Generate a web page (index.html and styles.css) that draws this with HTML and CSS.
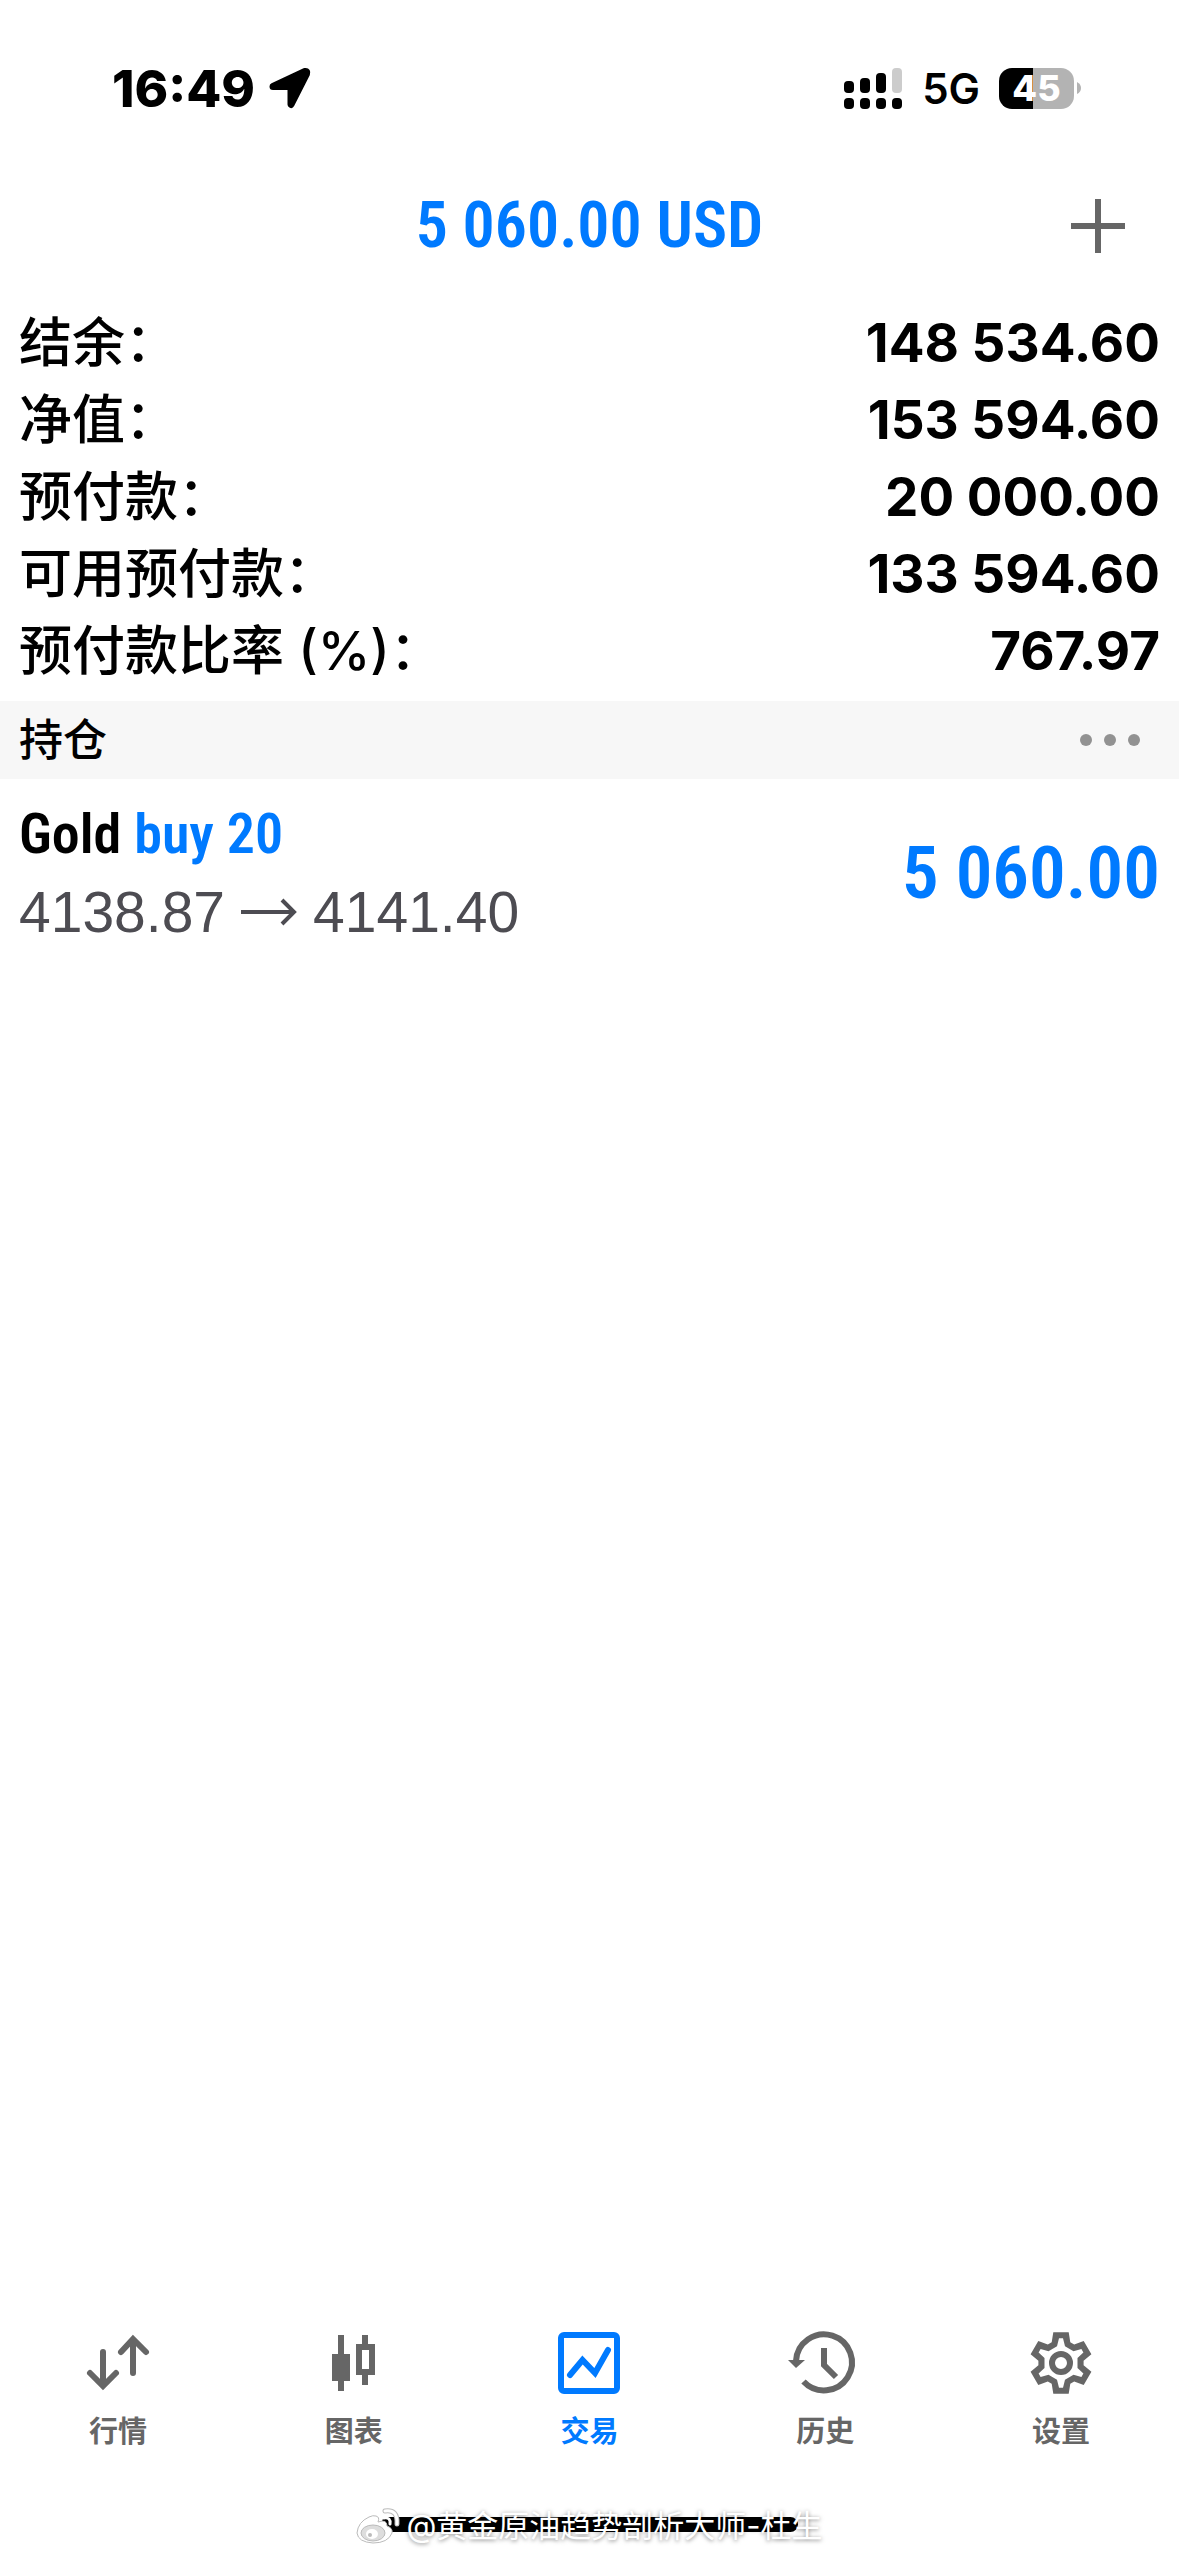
FILE: index.html
```
<!DOCTYPE html>
<html lang="zh-CN">
<head>
    <meta charset="UTF-8">
    <meta name="viewport" content="width=device-width, initial-scale=1.0">
    <title>交易</title>
    <link rel="stylesheet" href="styles.css">
</head>
<body>
<div class="status-bar">
    <div class="status-left">
        <span class="time">16:49</span>
        <svg class="location" viewBox="0 0 42 42">
            <path d="M4 19.5 36 4.5Q38.500 4 37.500 7L22 37.500 22 19.500Z" fill="#000" stroke="#000" stroke-width="7" stroke-linejoin="round"/>
        </svg>
    </div>
    <div class="status-right">
        <svg class="signal" viewBox="0 0 58 41">
            <rect x="0" y="13" width="10" height="12" rx="4"/>
            <rect x="16" y="10" width="10" height="15" rx="4"/>
            <rect x="32" y="5" width="10" height="20" rx="4"/>
            <rect x="48" y="0" width="10" height="25" rx="4" fill="#ccc"/>
            <rect x="0" y="30" width="10" height="11" rx="4"/>
            <rect x="16" y="30" width="10" height="11" rx="4"/>
            <rect x="32" y="30" width="10" height="11" rx="4"/>
            <rect x="48" y="30" width="10" height="11" rx="4"/>
        </svg>
        <span class="network">5G</span>
        <div class="battery">
            <div class="battery-level">45</div>
            <svg class="battery-cap" viewBox="0 0 4 12"><path d="M0 0Q4 2 4 6T0 12Z" fill="#b3b3b3"/></svg>
        </div>
    </div>
</div>

<header class="header">
    <h1>5 060.00 USD</h1>
    <button class="add" type="button" aria-label="新订单">
        <svg viewBox="0 0 54 54"><path d="M27 0V54M0 27H54" stroke="#666" stroke-width="6"/></svg>
    </button>
</header>

<main>
    <dl class="summary">
        <div class="summary-row"><dt>结余：</dt><dd>148 534.60</dd></div>
        <div class="summary-row"><dt>净值：</dt><dd>153 594.60</dd></div>
        <div class="summary-row"><dt>预付款：</dt><dd>20 000.00</dd></div>
        <div class="summary-row"><dt>可用预付款：</dt><dd>133 594.60</dd></div>
        <div class="summary-row"><dt>预付款比率 (%)：</dt><dd>767.97</dd></div>
    </dl>

    <div class="section-bar">
        <h2>持仓</h2>
        <button class="more" type="button" aria-label="更多">
            <svg viewBox="0 0 60 12" fill="#929292">
                <circle cx="6" cy="6" r="6"/>
                <circle cx="30" cy="6" r="6"/>
                <circle cx="54" cy="6" r="6"/>
            </svg>
        </button>
    </div>

    <div class="position">
        <div>
            <div class="symbol">Gold <span>buy 20</span></div>
            <div class="prices">
                4138.87
                <svg viewBox="0 0 56 28"><path d="M0 14H53M41 2 53 14 41 26" fill="none" stroke="#4d4c52" stroke-width="4"/></svg>
                4141.40
            </div>
        </div>
        <div class="profit">5 060.00</div>
    </div>
</main>

<nav class="tab-bar">
    <a href="#quotes">
        <svg viewBox="0 0 64 64" fill="none" stroke="currentColor" stroke-width="6" stroke-linecap="round">
            <path d="M17 21V54M4 42 17 55 30 42"/>
            <path d="M47 42V10M35 21 47 8 60 21"/>
        </svg>
        行情
    </a>
    <a href="#charts">
        <svg viewBox="0 0 64 64" fill="currentColor">
            <path d="M16 4h6v19h6v27h-6v10h-6V50h-6V23h6z"/>
            <path fill-rule="evenodd" d="M40 4h6v9h7v31h-7v10h-6V44h-6V13h6zM40 19v19h7V19z"/>
        </svg>
        图表
    </a>
    <a class="active" href="#trade">
        <svg viewBox="0 0 64 64" fill="none" stroke="currentColor" stroke-width="6">
            <rect x="4" y="4" width="56" height="56" rx="3"/>
            <path d="M13 44 25.500 29 38 42 51 19" stroke-linecap="round"/>
        </svg>
        交易
    </a>
    <a href="#history">
        <svg viewBox="0 0 64 64" fill="none" stroke="currentColor" stroke-width="6">
            <path d="M3 30A28 28 0 1 1 10.500 50.500"/>
            <path d="M31 17V34L43 46"/>
            <path d="M-5 29H12L3 37Z" fill="currentColor" stroke="none"/>
        </svg>
        历史
    </a>
    <a href="#settings">
        <svg viewBox="-32 -32 64 64">
            <path fill="currentColor" fill-rule="evenodd" d="M-7.700-30.700H7.700L9.300-20.700 13.200-18.400 22.700-22 30.400-8.700 22.600-2.300V2.300L30.400 8.700 22.700 22 13.200 18.400 9.300 20.700 7.700 30.700H-7.700L-9.300 20.700-13.200 18.400-22.700 22-30.400 8.700-22.600 2.300V-2.300L-30.400-8.700-22.700-22-13.200-18.400-9.300-20.700ZM-2-24.700-4-16.700-12.500-11.800-20.400-14.100-22.400-10.600-16.500-4.900V4.900L-22.400 10.600-20.400 14.100-12.500 11.800-4 16.700-2 24.700H2L4 16.700 12.500 11.800 20.400 14.100 22.400 10.600 16.500 4.900V-4.900L22.400-10.600 20.400-14.100 12.500-11.800 4-16.700 2-24.700Z"/>
            <circle r="9" fill="none" stroke="currentColor" stroke-width="6"/>
        </svg>
        设置
    </a>
</nav>

<footer class="home">
    <div class="home-indicator"></div>
    <div class="watermark">
        <svg viewBox="0 0 44 36">
            <path d="M29 3Q42 1 41 16" fill="none" stroke="#bbb" stroke-width="5" stroke-linecap="round"/>
            <path d="M29 3Q42 1 41 16M28 10Q35 9 34 16" fill="none" stroke="#fff" stroke-width="3" stroke-linecap="round"/>
            <path d="M20 8Q24 9 22 14 31 11 31 18 37 20 36 25 32 35 17 35 2 34 1 25 2 14 13 9 17 7 20 8Z" fill="#fff" stroke="#bbb"/>
            <ellipse cx="17" cy="25" rx="12" ry="8" fill="#ddd" stroke="#bbb"/>
            <ellipse cx="16" cy="26" rx="6" ry="5" fill="#fff"/>
            <circle cx="14" cy="27" r="2" fill="#bbb"/>
        </svg>
        <span>@黄金原油趋势剖析大师-杜生</span>
    </div>
</footer>
</body>
</html>
```
FILE: styles.css
```
* {
    box-sizing: border-box;
}

body {
    display: flex;
    flex-direction: column;
    min-height: 100vh;
    margin: 0;
    background-color: #fff;
    color: #000;
    font-family: Inter, "Noto Sans CJK SC", sans-serif;
}

h1, h2, dl, dd {
    margin: 0;
}

button {
    padding: 0;
    border: 0;
    background: none;
}

svg {
    display: block;
    overflow: visible;
}

main {
    flex: 1;
}

/* Status bar */
.status-bar {
    display: flex;
    justify-content: space-between;
    align-items: center;
    height: 176px;
    padding: 0 98px 0 112px;
}

.status-left, .status-right {
    display: flex;
    align-items: center;
}

.status-left {
    gap: 14px;
}

.time {
    font-size: 51px;
    font-weight: 800;
}

.location {
    width: 42px;
}

.signal {
    width: 58px;
}

.network {
    margin: 0 19px 0 20px;
    font-size: 42px;
    font-weight: 600;
}

.battery {
    display: flex;
    align-items: center;
    gap: 3px;
}

.battery-level {
    width: 75px;
    border-radius: 13px;
    background: linear-gradient(to right, #000 45%, #b3b3b3 45%);
    color: #fff;
    font-size: 36px;
    font-weight: 800;
    line-height: 41px;
    text-align: center;
}

.battery-cap {
    width: 4px;
}

/* Header */
.header {
    display: grid;
    grid-template-columns: 1fr auto 1fr;
    align-items: center;
    height: 100px;
    padding: 0 54px;
}

.header h1 {
    grid-column: 2;
    color: #007aff;
    font-family: "Roboto Condensed", "Liberation Sans Narrow", sans-serif;
    font-size: 64px;
    font-weight: 600;
    line-height: 100px;
}

.add {
    justify-self: end;
}

.add svg {
    width: 54px;
}

/* Account summary */
.summary {
    padding: 29px 19px 11px;
}

.summary-row {
    display: flex;
    justify-content: space-between;
    align-items: baseline;
    font-size: 53px;
    line-height: 77px;
}

.summary dt {
    font-weight: 500;
}

.summary dd {
    font-weight: 700;
}

.section-bar {
    display: flex;
    justify-content: space-between;
    align-items: center;
    height: 78px;
    padding: 0 39px 0 19px;
    background-color: #f7f7f7;
}

.section-bar h2 {
    font-size: 44px;
    font-weight: 500;
    line-height: 78px;
}

.more svg {
    width: 60px;
}

/* Open position */
.position {
    display: flex;
    justify-content: space-between;
    align-items: center;
    padding: 16px 19px;
    line-height: 78px;
}

.symbol, .profit {
    font-family: "Roboto Condensed", "Liberation Sans Narrow", sans-serif;
    font-weight: 600;
}

.symbol {
    font-size: 56px;
}

.symbol span, .profit {
    color: #007aff;
}

.prices {
    display: flex;
    align-items: center;
    gap: 16px;
    color: #4d4c52;
    font-family: "Liberation Sans", sans-serif;
    font-size: 57px;
}

.prices svg {
    width: 56px;
}

.profit {
    font-size: 73px;
}

/* Tabs */
.tab-bar {
    display: grid;
    grid-template-columns: repeat(5, 1fr);
}

.tab-bar a {
    display: flex;
    flex-direction: column;
    align-items: center;
    gap: 16px;
    color: #666;
    font-size: 29px;
    font-weight: 600;
    line-height: 42px;
    text-decoration: none;
}

.tab-bar .active {
    color: #007aff;
}

.tab-bar svg {
    width: 64px;
}

/* Home indicator */
.home {
    position: relative;
    padding: 64px 0 24px;
}

.home-indicator {
    width: 417px;
    height: 15px;
    margin: 0 auto;
    border-radius: 8px;
    background-color: #000;
}

.watermark {
    position: absolute;
    right: 0;
    bottom: 8px;
    left: 0;
    display: flex;
    justify-content: center;
    align-items: center;
    gap: 6px;
    color: #fff;
    font-size: 31px;
    line-height: 44px;
    text-shadow: 0 1px 4px rgba(0, 0, 0, 0.5);
}

.watermark svg {
    width: 44px;
}
```
